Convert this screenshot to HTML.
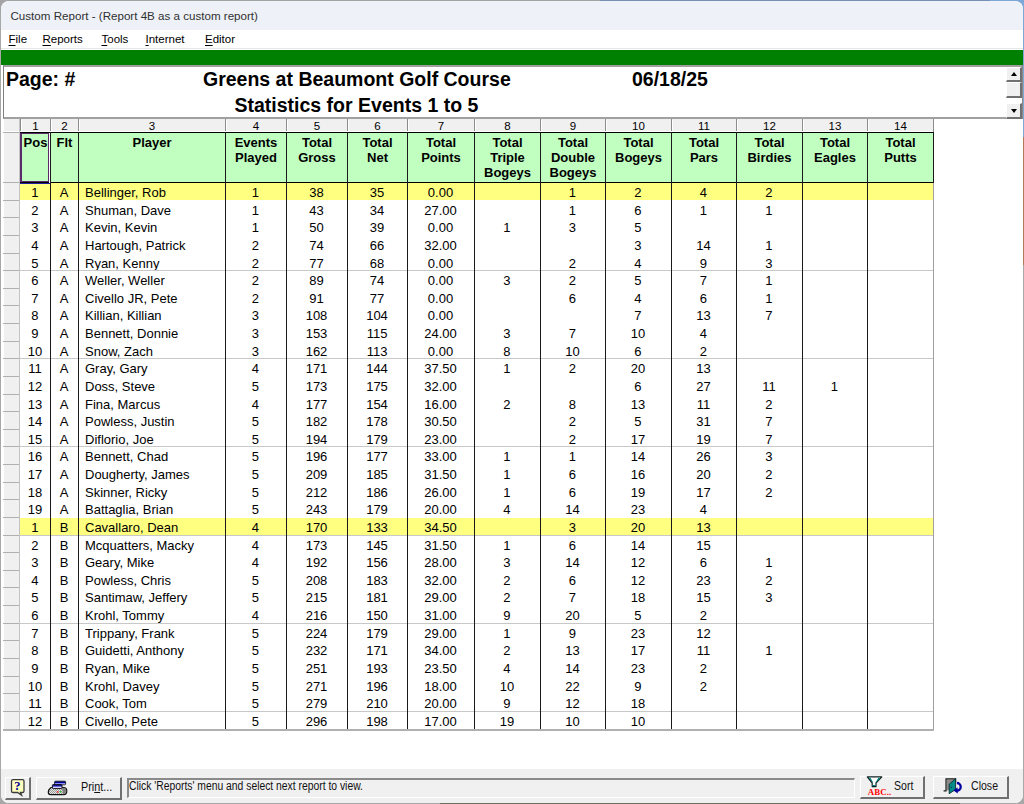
<!DOCTYPE html>
<html><head><meta charset="utf-8"><title>Custom Report</title>
<style>
*{box-sizing:border-box;margin:0;padding:0}
html,body{width:1024px;height:804px;overflow:hidden}
body{position:relative;background:#a8a8a8;font-family:"Liberation Sans",sans-serif;color:#000}
.a{position:absolute}
.t{position:absolute;white-space:nowrap;line-height:1}
#win{position:absolute;left:1px;top:1px;width:1021.5px;height:802px;background:#fff;border-radius:8px;overflow:hidden}
#title{position:absolute;left:0;top:0;width:1022px;height:29px;background:#eef2f8}
#menu{position:absolute;left:0;top:29px;width:1022px;height:19px;background:#fff}
.mi{position:absolute;top:32.5px;font-size:11.5px;color:#000;line-height:1}
.mi u{text-decoration:underline;text-underline-offset:1.5px}
#green{position:absolute;left:0;top:49px;width:1022px;height:15px;background:#008000}
.num{font-size:11.5px;text-align:center;color:#000}
.hd{font-size:13px;font-weight:bold;text-align:center;line-height:15.4px}
.cell{position:absolute;font-size:13.5px;line-height:1;white-space:nowrap;text-align:center;color:#000;transform:scaleX(0.963)}
.btn{position:absolute;background:#f0f0f0;border-style:solid;border-width:1px 2px 2px 1px;border-color:#fff #707070 #707070 #fff}
</style></head><body>
<div class="a" style="left:0;top:0;width:1024px;height:12px;background:#a4a4a4"></div>
<div class="a" style="left:600px;top:0;width:424px;height:12px;background:#7590b4"></div>
<div class="a" style="left:990px;top:0;width:34px;height:137px;background:#7da7d6"></div>
<div class="a" style="left:1000px;top:137px;width:24px;height:128px;background:#b07a58"></div>
<div class="a" style="left:440px;top:790px;width:520px;height:14px;background:#6a6f60"></div>
<div id="win">
<div id="title"></div>
<div class="t" style="left:9.5px;top:8.8px;font-size:11.6px;color:#303030">Custom Report - (Report 4B as a custom report)</div>
<div id="menu"></div>

<div class="mi" style="left:7.5px"><u>F</u>ile</div>
<div class="mi" style="left:41.5px"><u>R</u>eports</div>
<div class="mi" style="left:100.5px"><u>T</u>ools</div>
<div class="mi" style="left:144.5px"><u>I</u>nternet</div>
<div class="mi" style="left:204px"><u>E</u>ditor</div>
<div class="a" style="left:0;top:47px;width:1022px;height:1px;background:#e6e6e6"></div>
<div id="green"></div>
<div class="a" style="left:2px;top:64px;width:1019px;height:54px;border-top:2px solid #a0a0a0;border-left:1px solid #808080;border-bottom:2px solid #a0a0a0;background:#fff"></div>
<div class="t" style="left:5px;top:68.5px;font-size:19.5px;font-weight:bold">Page: #</div>
<div class="t" style="left:202px;top:68.5px;font-size:19.5px;font-weight:bold">Greens at Beaumont Golf Course</div>
<div class="t" style="left:631px;top:68.5px;font-size:19.5px;font-weight:bold">06/18/25</div>
<div class="t" style="left:233.5px;top:94.8px;font-size:19.5px;font-weight:bold">Statistics for Events 1 to 5</div>
<div class="a" style="left:1021px;top:64px;width:1px;height:54px;background:#8a8a8a"></div>
<div class="a" style="left:1005px;top:66px;width:16px;height:51px;background:#fff"></div>
<div class="btn" style="left:1005px;top:66px;width:16px;height:15px"></div>
<div class="btn" style="left:1005px;top:81px;width:16px;height:16px"></div>
<div class="btn" style="left:1005px;top:102px;width:16px;height:15.5px"></div>
<div class="a" style="left:1009.5px;top:71px;width:0;height:0;border-left:3.5px solid transparent;border-right:3.5px solid transparent;border-bottom:4px solid #000"></div>
<div class="a" style="left:1009.5px;top:108px;width:0;height:0;border-left:3.5px solid transparent;border-right:3.5px solid transparent;border-top:4px solid #000"></div>
<div class="a" style="left:2px;top:118px;width:931px;height:13px;background:#f0f0f0"></div>
<div class="a" style="left:2px;top:118px;width:17px;height:610px;background:#f0f0f0;border-left:1px solid #fff"></div>
<div class="t num" style="left:20px;top:119.5px;width:29px">1</div>
<div class="a" style="left:19px;top:118px;width:1px;height:13px;background:#8c8c8c"></div>
<div class="a" style="left:20px;top:119px;width:1px;height:12px;background:#fff"></div>
<div class="t num" style="left:50px;top:119.5px;width:27px">2</div>
<div class="a" style="left:49px;top:118px;width:1px;height:13px;background:#8c8c8c"></div>
<div class="a" style="left:50px;top:119px;width:1px;height:12px;background:#fff"></div>
<div class="t num" style="left:78px;top:119.5px;width:146px">3</div>
<div class="a" style="left:77px;top:118px;width:1px;height:13px;background:#8c8c8c"></div>
<div class="a" style="left:78px;top:119px;width:1px;height:12px;background:#fff"></div>
<div class="t num" style="left:225px;top:119.5px;width:60px">4</div>
<div class="a" style="left:224px;top:118px;width:1px;height:13px;background:#8c8c8c"></div>
<div class="a" style="left:225px;top:119px;width:1px;height:12px;background:#fff"></div>
<div class="t num" style="left:286px;top:119.5px;width:60px">5</div>
<div class="a" style="left:285px;top:118px;width:1px;height:13px;background:#8c8c8c"></div>
<div class="a" style="left:286px;top:119px;width:1px;height:12px;background:#fff"></div>
<div class="t num" style="left:347px;top:119.5px;width:59px">6</div>
<div class="a" style="left:346px;top:118px;width:1px;height:13px;background:#8c8c8c"></div>
<div class="a" style="left:347px;top:119px;width:1px;height:12px;background:#fff"></div>
<div class="t num" style="left:407px;top:119.5px;width:66px">7</div>
<div class="a" style="left:406px;top:118px;width:1px;height:13px;background:#8c8c8c"></div>
<div class="a" style="left:407px;top:119px;width:1px;height:12px;background:#fff"></div>
<div class="t num" style="left:474px;top:119.5px;width:65px">8</div>
<div class="a" style="left:473px;top:118px;width:1px;height:13px;background:#8c8c8c"></div>
<div class="a" style="left:474px;top:119px;width:1px;height:12px;background:#fff"></div>
<div class="t num" style="left:540px;top:119.5px;width:64px">9</div>
<div class="a" style="left:539px;top:118px;width:1px;height:13px;background:#8c8c8c"></div>
<div class="a" style="left:540px;top:119px;width:1px;height:12px;background:#fff"></div>
<div class="t num" style="left:605px;top:119.5px;width:65px">10</div>
<div class="a" style="left:604px;top:118px;width:1px;height:13px;background:#8c8c8c"></div>
<div class="a" style="left:605px;top:119px;width:1px;height:12px;background:#fff"></div>
<div class="t num" style="left:671px;top:119.5px;width:64px">11</div>
<div class="a" style="left:670px;top:118px;width:1px;height:13px;background:#8c8c8c"></div>
<div class="a" style="left:671px;top:119px;width:1px;height:12px;background:#fff"></div>
<div class="t num" style="left:736px;top:119.5px;width:65px">12</div>
<div class="a" style="left:735px;top:118px;width:1px;height:13px;background:#8c8c8c"></div>
<div class="a" style="left:736px;top:119px;width:1px;height:12px;background:#fff"></div>
<div class="t num" style="left:802px;top:119.5px;width:64px">13</div>
<div class="a" style="left:801px;top:118px;width:1px;height:13px;background:#8c8c8c"></div>
<div class="a" style="left:802px;top:119px;width:1px;height:12px;background:#fff"></div>
<div class="t num" style="left:867px;top:119.5px;width:65px">14</div>
<div class="a" style="left:866px;top:118px;width:1px;height:13px;background:#8c8c8c"></div>
<div class="a" style="left:867px;top:119px;width:1px;height:12px;background:#fff"></div>
<div class="a" style="left:932px;top:118px;width:1px;height:13px;background:#8c8c8c"></div>
<div class="a" style="left:2px;top:130px;width:930px;height:1px;background:#fff"></div>
<div class="a" style="left:19px;top:131px;width:914px;height:50px;background:#c0ffc0"></div>
<div class="t hd" style="left:20px;top:133.5px;width:29px;white-space:normal">Pos</div>
<div class="t hd" style="left:50px;top:133.5px;width:27px;white-space:normal">Flt</div>
<div class="t hd" style="left:78px;top:133.5px;width:146px;white-space:normal">Player</div>
<div class="t hd" style="left:225px;top:133.5px;width:60px;white-space:normal">Events<br>Played</div>
<div class="t hd" style="left:286px;top:133.5px;width:60px;white-space:normal">Total<br>Gross</div>
<div class="t hd" style="left:347px;top:133.5px;width:59px;white-space:normal">Total<br>Net</div>
<div class="t hd" style="left:407px;top:133.5px;width:66px;white-space:normal">Total<br>Points</div>
<div class="t hd" style="left:474px;top:133.5px;width:65px;white-space:normal">Total<br>Triple<br>Bogeys</div>
<div class="t hd" style="left:540px;top:133.5px;width:64px;white-space:normal">Total<br>Double<br>Bogeys</div>
<div class="t hd" style="left:605px;top:133.5px;width:65px;white-space:normal">Total<br>Bogeys</div>
<div class="t hd" style="left:671px;top:133.5px;width:64px;white-space:normal">Total<br>Pars</div>
<div class="t hd" style="left:736px;top:133.5px;width:65px;white-space:normal">Total<br>Birdies</div>
<div class="t hd" style="left:802px;top:133.5px;width:64px;white-space:normal">Total<br>Eagles</div>
<div class="t hd" style="left:867px;top:133.5px;width:65px;white-space:normal">Total<br>Putts</div>
<div class="a" style="left:19px;top:182px;width:914px;height:17px;background:#ffff80"></div>
<div class="cell" style="left:18.5px;top:185.0px;width:30px">1</div>
<div class="cell" style="left:48.5px;top:185.0px;width:28px">A</div>
<div class="cell" style="left:84px;top:185.0px;text-align:left;transform-origin:0 0">Bellinger, Rob</div>
<div class="cell" style="left:223.5px;top:185.0px;width:61px">1</div>
<div class="cell" style="left:284.5px;top:185.0px;width:61px">38</div>
<div class="cell" style="left:345.5px;top:185.0px;width:60px">35</div>
<div class="cell" style="left:405.5px;top:185.0px;width:67px">0.00</div>
<div class="cell" style="left:538.5px;top:185.0px;width:65px">1</div>
<div class="cell" style="left:603.5px;top:185.0px;width:66px">2</div>
<div class="cell" style="left:669.5px;top:185.0px;width:65px">4</div>
<div class="cell" style="left:734.5px;top:185.0px;width:66px">2</div>
<div class="cell" style="left:18.5px;top:202.63px;width:30px">2</div>
<div class="cell" style="left:48.5px;top:202.63px;width:28px">A</div>
<div class="cell" style="left:84px;top:202.63px;text-align:left;transform-origin:0 0">Shuman, Dave</div>
<div class="cell" style="left:223.5px;top:202.63px;width:61px">1</div>
<div class="cell" style="left:284.5px;top:202.63px;width:61px">43</div>
<div class="cell" style="left:345.5px;top:202.63px;width:60px">34</div>
<div class="cell" style="left:405.5px;top:202.63px;width:67px">27.00</div>
<div class="cell" style="left:538.5px;top:202.63px;width:65px">1</div>
<div class="cell" style="left:603.5px;top:202.63px;width:66px">6</div>
<div class="cell" style="left:669.5px;top:202.63px;width:65px">1</div>
<div class="cell" style="left:734.5px;top:202.63px;width:66px">1</div>
<div class="cell" style="left:18.5px;top:220.26px;width:30px">3</div>
<div class="cell" style="left:48.5px;top:220.26px;width:28px">A</div>
<div class="cell" style="left:84px;top:220.26px;text-align:left;transform-origin:0 0">Kevin, Kevin</div>
<div class="cell" style="left:223.5px;top:220.26px;width:61px">1</div>
<div class="cell" style="left:284.5px;top:220.26px;width:61px">50</div>
<div class="cell" style="left:345.5px;top:220.26px;width:60px">39</div>
<div class="cell" style="left:405.5px;top:220.26px;width:67px">0.00</div>
<div class="cell" style="left:472.5px;top:220.26px;width:66px">1</div>
<div class="cell" style="left:538.5px;top:220.26px;width:65px">3</div>
<div class="cell" style="left:603.5px;top:220.26px;width:66px">5</div>
<div class="cell" style="left:18.5px;top:237.89000000000001px;width:30px">4</div>
<div class="cell" style="left:48.5px;top:237.89000000000001px;width:28px">A</div>
<div class="cell" style="left:84px;top:237.89000000000001px;text-align:left;transform-origin:0 0">Hartough, Patrick</div>
<div class="cell" style="left:223.5px;top:237.89000000000001px;width:61px">2</div>
<div class="cell" style="left:284.5px;top:237.89000000000001px;width:61px">74</div>
<div class="cell" style="left:345.5px;top:237.89000000000001px;width:60px">66</div>
<div class="cell" style="left:405.5px;top:237.89000000000001px;width:67px">32.00</div>
<div class="cell" style="left:603.5px;top:237.89000000000001px;width:66px">3</div>
<div class="cell" style="left:669.5px;top:237.89000000000001px;width:65px">14</div>
<div class="cell" style="left:734.5px;top:237.89000000000001px;width:66px">1</div>
<div class="cell" style="left:18.5px;top:255.51999999999998px;width:30px">5</div>
<div class="cell" style="left:48.5px;top:255.51999999999998px;width:28px">A</div>
<div class="cell" style="left:84px;top:255.51999999999998px;text-align:left;transform-origin:0 0">Ryan, Kenny</div>
<div class="cell" style="left:223.5px;top:255.51999999999998px;width:61px">2</div>
<div class="cell" style="left:284.5px;top:255.51999999999998px;width:61px">77</div>
<div class="cell" style="left:345.5px;top:255.51999999999998px;width:60px">68</div>
<div class="cell" style="left:405.5px;top:255.51999999999998px;width:67px">0.00</div>
<div class="cell" style="left:538.5px;top:255.51999999999998px;width:65px">2</div>
<div class="cell" style="left:603.5px;top:255.51999999999998px;width:66px">4</div>
<div class="cell" style="left:669.5px;top:255.51999999999998px;width:65px">9</div>
<div class="cell" style="left:734.5px;top:255.51999999999998px;width:66px">3</div>
<div class="cell" style="left:18.5px;top:273.15px;width:30px">6</div>
<div class="cell" style="left:48.5px;top:273.15px;width:28px">A</div>
<div class="cell" style="left:84px;top:273.15px;text-align:left;transform-origin:0 0">Weller, Weller</div>
<div class="cell" style="left:223.5px;top:273.15px;width:61px">2</div>
<div class="cell" style="left:284.5px;top:273.15px;width:61px">89</div>
<div class="cell" style="left:345.5px;top:273.15px;width:60px">74</div>
<div class="cell" style="left:405.5px;top:273.15px;width:67px">0.00</div>
<div class="cell" style="left:472.5px;top:273.15px;width:66px">3</div>
<div class="cell" style="left:538.5px;top:273.15px;width:65px">2</div>
<div class="cell" style="left:603.5px;top:273.15px;width:66px">5</div>
<div class="cell" style="left:669.5px;top:273.15px;width:65px">7</div>
<div class="cell" style="left:734.5px;top:273.15px;width:66px">1</div>
<div class="cell" style="left:18.5px;top:290.78px;width:30px">7</div>
<div class="cell" style="left:48.5px;top:290.78px;width:28px">A</div>
<div class="cell" style="left:84px;top:290.78px;text-align:left;transform-origin:0 0">Civello JR, Pete</div>
<div class="cell" style="left:223.5px;top:290.78px;width:61px">2</div>
<div class="cell" style="left:284.5px;top:290.78px;width:61px">91</div>
<div class="cell" style="left:345.5px;top:290.78px;width:60px">77</div>
<div class="cell" style="left:405.5px;top:290.78px;width:67px">0.00</div>
<div class="cell" style="left:538.5px;top:290.78px;width:65px">6</div>
<div class="cell" style="left:603.5px;top:290.78px;width:66px">4</div>
<div class="cell" style="left:669.5px;top:290.78px;width:65px">6</div>
<div class="cell" style="left:734.5px;top:290.78px;width:66px">1</div>
<div class="cell" style="left:18.5px;top:308.40999999999997px;width:30px">8</div>
<div class="cell" style="left:48.5px;top:308.40999999999997px;width:28px">A</div>
<div class="cell" style="left:84px;top:308.40999999999997px;text-align:left;transform-origin:0 0">Killian, Killian</div>
<div class="cell" style="left:223.5px;top:308.40999999999997px;width:61px">3</div>
<div class="cell" style="left:284.5px;top:308.40999999999997px;width:61px">108</div>
<div class="cell" style="left:345.5px;top:308.40999999999997px;width:60px">104</div>
<div class="cell" style="left:405.5px;top:308.40999999999997px;width:67px">0.00</div>
<div class="cell" style="left:603.5px;top:308.40999999999997px;width:66px">7</div>
<div class="cell" style="left:669.5px;top:308.40999999999997px;width:65px">13</div>
<div class="cell" style="left:734.5px;top:308.40999999999997px;width:66px">7</div>
<div class="cell" style="left:18.5px;top:326.03999999999996px;width:30px">9</div>
<div class="cell" style="left:48.5px;top:326.03999999999996px;width:28px">A</div>
<div class="cell" style="left:84px;top:326.03999999999996px;text-align:left;transform-origin:0 0">Bennett, Donnie</div>
<div class="cell" style="left:223.5px;top:326.03999999999996px;width:61px">3</div>
<div class="cell" style="left:284.5px;top:326.03999999999996px;width:61px">153</div>
<div class="cell" style="left:345.5px;top:326.03999999999996px;width:60px">115</div>
<div class="cell" style="left:405.5px;top:326.03999999999996px;width:67px">24.00</div>
<div class="cell" style="left:472.5px;top:326.03999999999996px;width:66px">3</div>
<div class="cell" style="left:538.5px;top:326.03999999999996px;width:65px">7</div>
<div class="cell" style="left:603.5px;top:326.03999999999996px;width:66px">10</div>
<div class="cell" style="left:669.5px;top:326.03999999999996px;width:65px">4</div>
<div class="cell" style="left:18.5px;top:343.66999999999996px;width:30px">10</div>
<div class="cell" style="left:48.5px;top:343.66999999999996px;width:28px">A</div>
<div class="cell" style="left:84px;top:343.66999999999996px;text-align:left;transform-origin:0 0">Snow, Zach</div>
<div class="cell" style="left:223.5px;top:343.66999999999996px;width:61px">3</div>
<div class="cell" style="left:284.5px;top:343.66999999999996px;width:61px">162</div>
<div class="cell" style="left:345.5px;top:343.66999999999996px;width:60px">113</div>
<div class="cell" style="left:405.5px;top:343.66999999999996px;width:67px">0.00</div>
<div class="cell" style="left:472.5px;top:343.66999999999996px;width:66px">8</div>
<div class="cell" style="left:538.5px;top:343.66999999999996px;width:65px">10</div>
<div class="cell" style="left:603.5px;top:343.66999999999996px;width:66px">6</div>
<div class="cell" style="left:669.5px;top:343.66999999999996px;width:65px">2</div>
<div class="cell" style="left:18.5px;top:361.29999999999995px;width:30px">11</div>
<div class="cell" style="left:48.5px;top:361.29999999999995px;width:28px">A</div>
<div class="cell" style="left:84px;top:361.29999999999995px;text-align:left;transform-origin:0 0">Gray, Gary</div>
<div class="cell" style="left:223.5px;top:361.29999999999995px;width:61px">4</div>
<div class="cell" style="left:284.5px;top:361.29999999999995px;width:61px">171</div>
<div class="cell" style="left:345.5px;top:361.29999999999995px;width:60px">144</div>
<div class="cell" style="left:405.5px;top:361.29999999999995px;width:67px">37.50</div>
<div class="cell" style="left:472.5px;top:361.29999999999995px;width:66px">1</div>
<div class="cell" style="left:538.5px;top:361.29999999999995px;width:65px">2</div>
<div class="cell" style="left:603.5px;top:361.29999999999995px;width:66px">20</div>
<div class="cell" style="left:669.5px;top:361.29999999999995px;width:65px">13</div>
<div class="cell" style="left:18.5px;top:378.92999999999995px;width:30px">12</div>
<div class="cell" style="left:48.5px;top:378.92999999999995px;width:28px">A</div>
<div class="cell" style="left:84px;top:378.92999999999995px;text-align:left;transform-origin:0 0">Doss, Steve</div>
<div class="cell" style="left:223.5px;top:378.92999999999995px;width:61px">5</div>
<div class="cell" style="left:284.5px;top:378.92999999999995px;width:61px">173</div>
<div class="cell" style="left:345.5px;top:378.92999999999995px;width:60px">175</div>
<div class="cell" style="left:405.5px;top:378.92999999999995px;width:67px">32.00</div>
<div class="cell" style="left:603.5px;top:378.92999999999995px;width:66px">6</div>
<div class="cell" style="left:669.5px;top:378.92999999999995px;width:65px">27</div>
<div class="cell" style="left:734.5px;top:378.92999999999995px;width:66px">11</div>
<div class="cell" style="left:800.5px;top:378.92999999999995px;width:65px">1</div>
<div class="cell" style="left:18.5px;top:396.55999999999995px;width:30px">13</div>
<div class="cell" style="left:48.5px;top:396.55999999999995px;width:28px">A</div>
<div class="cell" style="left:84px;top:396.55999999999995px;text-align:left;transform-origin:0 0">Fina, Marcus</div>
<div class="cell" style="left:223.5px;top:396.55999999999995px;width:61px">4</div>
<div class="cell" style="left:284.5px;top:396.55999999999995px;width:61px">177</div>
<div class="cell" style="left:345.5px;top:396.55999999999995px;width:60px">154</div>
<div class="cell" style="left:405.5px;top:396.55999999999995px;width:67px">16.00</div>
<div class="cell" style="left:472.5px;top:396.55999999999995px;width:66px">2</div>
<div class="cell" style="left:538.5px;top:396.55999999999995px;width:65px">8</div>
<div class="cell" style="left:603.5px;top:396.55999999999995px;width:66px">13</div>
<div class="cell" style="left:669.5px;top:396.55999999999995px;width:65px">11</div>
<div class="cell" style="left:734.5px;top:396.55999999999995px;width:66px">2</div>
<div class="cell" style="left:18.5px;top:414.18999999999994px;width:30px">14</div>
<div class="cell" style="left:48.5px;top:414.18999999999994px;width:28px">A</div>
<div class="cell" style="left:84px;top:414.18999999999994px;text-align:left;transform-origin:0 0">Powless, Justin</div>
<div class="cell" style="left:223.5px;top:414.18999999999994px;width:61px">5</div>
<div class="cell" style="left:284.5px;top:414.18999999999994px;width:61px">182</div>
<div class="cell" style="left:345.5px;top:414.18999999999994px;width:60px">178</div>
<div class="cell" style="left:405.5px;top:414.18999999999994px;width:67px">30.50</div>
<div class="cell" style="left:538.5px;top:414.18999999999994px;width:65px">2</div>
<div class="cell" style="left:603.5px;top:414.18999999999994px;width:66px">5</div>
<div class="cell" style="left:669.5px;top:414.18999999999994px;width:65px">31</div>
<div class="cell" style="left:734.5px;top:414.18999999999994px;width:66px">7</div>
<div class="cell" style="left:18.5px;top:431.81999999999994px;width:30px">15</div>
<div class="cell" style="left:48.5px;top:431.81999999999994px;width:28px">A</div>
<div class="cell" style="left:84px;top:431.81999999999994px;text-align:left;transform-origin:0 0">Diflorio, Joe</div>
<div class="cell" style="left:223.5px;top:431.81999999999994px;width:61px">5</div>
<div class="cell" style="left:284.5px;top:431.81999999999994px;width:61px">194</div>
<div class="cell" style="left:345.5px;top:431.81999999999994px;width:60px">179</div>
<div class="cell" style="left:405.5px;top:431.81999999999994px;width:67px">23.00</div>
<div class="cell" style="left:538.5px;top:431.81999999999994px;width:65px">2</div>
<div class="cell" style="left:603.5px;top:431.81999999999994px;width:66px">17</div>
<div class="cell" style="left:669.5px;top:431.81999999999994px;width:65px">19</div>
<div class="cell" style="left:734.5px;top:431.81999999999994px;width:66px">7</div>
<div class="cell" style="left:18.5px;top:449.44999999999993px;width:30px">16</div>
<div class="cell" style="left:48.5px;top:449.44999999999993px;width:28px">A</div>
<div class="cell" style="left:84px;top:449.44999999999993px;text-align:left;transform-origin:0 0">Bennett, Chad</div>
<div class="cell" style="left:223.5px;top:449.44999999999993px;width:61px">5</div>
<div class="cell" style="left:284.5px;top:449.44999999999993px;width:61px">196</div>
<div class="cell" style="left:345.5px;top:449.44999999999993px;width:60px">177</div>
<div class="cell" style="left:405.5px;top:449.44999999999993px;width:67px">33.00</div>
<div class="cell" style="left:472.5px;top:449.44999999999993px;width:66px">1</div>
<div class="cell" style="left:538.5px;top:449.44999999999993px;width:65px">1</div>
<div class="cell" style="left:603.5px;top:449.44999999999993px;width:66px">14</div>
<div class="cell" style="left:669.5px;top:449.44999999999993px;width:65px">26</div>
<div class="cell" style="left:734.5px;top:449.44999999999993px;width:66px">3</div>
<div class="cell" style="left:18.5px;top:467.0799999999999px;width:30px">17</div>
<div class="cell" style="left:48.5px;top:467.0799999999999px;width:28px">A</div>
<div class="cell" style="left:84px;top:467.0799999999999px;text-align:left;transform-origin:0 0">Dougherty, James</div>
<div class="cell" style="left:223.5px;top:467.0799999999999px;width:61px">5</div>
<div class="cell" style="left:284.5px;top:467.0799999999999px;width:61px">209</div>
<div class="cell" style="left:345.5px;top:467.0799999999999px;width:60px">185</div>
<div class="cell" style="left:405.5px;top:467.0799999999999px;width:67px">31.50</div>
<div class="cell" style="left:472.5px;top:467.0799999999999px;width:66px">1</div>
<div class="cell" style="left:538.5px;top:467.0799999999999px;width:65px">6</div>
<div class="cell" style="left:603.5px;top:467.0799999999999px;width:66px">16</div>
<div class="cell" style="left:669.5px;top:467.0799999999999px;width:65px">20</div>
<div class="cell" style="left:734.5px;top:467.0799999999999px;width:66px">2</div>
<div class="cell" style="left:18.5px;top:484.7099999999999px;width:30px">18</div>
<div class="cell" style="left:48.5px;top:484.7099999999999px;width:28px">A</div>
<div class="cell" style="left:84px;top:484.7099999999999px;text-align:left;transform-origin:0 0">Skinner, Ricky</div>
<div class="cell" style="left:223.5px;top:484.7099999999999px;width:61px">5</div>
<div class="cell" style="left:284.5px;top:484.7099999999999px;width:61px">212</div>
<div class="cell" style="left:345.5px;top:484.7099999999999px;width:60px">186</div>
<div class="cell" style="left:405.5px;top:484.7099999999999px;width:67px">26.00</div>
<div class="cell" style="left:472.5px;top:484.7099999999999px;width:66px">1</div>
<div class="cell" style="left:538.5px;top:484.7099999999999px;width:65px">6</div>
<div class="cell" style="left:603.5px;top:484.7099999999999px;width:66px">19</div>
<div class="cell" style="left:669.5px;top:484.7099999999999px;width:65px">17</div>
<div class="cell" style="left:734.5px;top:484.7099999999999px;width:66px">2</div>
<div class="cell" style="left:18.5px;top:502.3399999999999px;width:30px">19</div>
<div class="cell" style="left:48.5px;top:502.3399999999999px;width:28px">A</div>
<div class="cell" style="left:84px;top:502.3399999999999px;text-align:left;transform-origin:0 0">Battaglia, Brian</div>
<div class="cell" style="left:223.5px;top:502.3399999999999px;width:61px">5</div>
<div class="cell" style="left:284.5px;top:502.3399999999999px;width:61px">243</div>
<div class="cell" style="left:345.5px;top:502.3399999999999px;width:60px">179</div>
<div class="cell" style="left:405.5px;top:502.3399999999999px;width:67px">20.00</div>
<div class="cell" style="left:472.5px;top:502.3399999999999px;width:66px">4</div>
<div class="cell" style="left:538.5px;top:502.3399999999999px;width:65px">14</div>
<div class="cell" style="left:603.5px;top:502.3399999999999px;width:66px">23</div>
<div class="cell" style="left:669.5px;top:502.3399999999999px;width:65px">4</div>
<div class="a" style="left:19px;top:517px;width:914px;height:17px;background:#ffff80"></div>
<div class="cell" style="left:18.5px;top:519.9699999999999px;width:30px">1</div>
<div class="cell" style="left:48.5px;top:519.9699999999999px;width:28px">B</div>
<div class="cell" style="left:84px;top:519.9699999999999px;text-align:left;transform-origin:0 0">Cavallaro, Dean</div>
<div class="cell" style="left:223.5px;top:519.9699999999999px;width:61px">4</div>
<div class="cell" style="left:284.5px;top:519.9699999999999px;width:61px">170</div>
<div class="cell" style="left:345.5px;top:519.9699999999999px;width:60px">133</div>
<div class="cell" style="left:405.5px;top:519.9699999999999px;width:67px">34.50</div>
<div class="cell" style="left:538.5px;top:519.9699999999999px;width:65px">3</div>
<div class="cell" style="left:603.5px;top:519.9699999999999px;width:66px">20</div>
<div class="cell" style="left:669.5px;top:519.9699999999999px;width:65px">13</div>
<div class="cell" style="left:18.5px;top:537.5999999999999px;width:30px">2</div>
<div class="cell" style="left:48.5px;top:537.5999999999999px;width:28px">B</div>
<div class="cell" style="left:84px;top:537.5999999999999px;text-align:left;transform-origin:0 0">Mcquatters, Macky</div>
<div class="cell" style="left:223.5px;top:537.5999999999999px;width:61px">4</div>
<div class="cell" style="left:284.5px;top:537.5999999999999px;width:61px">173</div>
<div class="cell" style="left:345.5px;top:537.5999999999999px;width:60px">145</div>
<div class="cell" style="left:405.5px;top:537.5999999999999px;width:67px">31.50</div>
<div class="cell" style="left:472.5px;top:537.5999999999999px;width:66px">1</div>
<div class="cell" style="left:538.5px;top:537.5999999999999px;width:65px">6</div>
<div class="cell" style="left:603.5px;top:537.5999999999999px;width:66px">14</div>
<div class="cell" style="left:669.5px;top:537.5999999999999px;width:65px">15</div>
<div class="cell" style="left:18.5px;top:555.2299999999999px;width:30px">3</div>
<div class="cell" style="left:48.5px;top:555.2299999999999px;width:28px">B</div>
<div class="cell" style="left:84px;top:555.2299999999999px;text-align:left;transform-origin:0 0">Geary, Mike</div>
<div class="cell" style="left:223.5px;top:555.2299999999999px;width:61px">4</div>
<div class="cell" style="left:284.5px;top:555.2299999999999px;width:61px">192</div>
<div class="cell" style="left:345.5px;top:555.2299999999999px;width:60px">156</div>
<div class="cell" style="left:405.5px;top:555.2299999999999px;width:67px">28.00</div>
<div class="cell" style="left:472.5px;top:555.2299999999999px;width:66px">3</div>
<div class="cell" style="left:538.5px;top:555.2299999999999px;width:65px">14</div>
<div class="cell" style="left:603.5px;top:555.2299999999999px;width:66px">12</div>
<div class="cell" style="left:669.5px;top:555.2299999999999px;width:65px">6</div>
<div class="cell" style="left:734.5px;top:555.2299999999999px;width:66px">1</div>
<div class="cell" style="left:18.5px;top:572.8599999999999px;width:30px">4</div>
<div class="cell" style="left:48.5px;top:572.8599999999999px;width:28px">B</div>
<div class="cell" style="left:84px;top:572.8599999999999px;text-align:left;transform-origin:0 0">Powless, Chris</div>
<div class="cell" style="left:223.5px;top:572.8599999999999px;width:61px">5</div>
<div class="cell" style="left:284.5px;top:572.8599999999999px;width:61px">208</div>
<div class="cell" style="left:345.5px;top:572.8599999999999px;width:60px">183</div>
<div class="cell" style="left:405.5px;top:572.8599999999999px;width:67px">32.00</div>
<div class="cell" style="left:472.5px;top:572.8599999999999px;width:66px">2</div>
<div class="cell" style="left:538.5px;top:572.8599999999999px;width:65px">6</div>
<div class="cell" style="left:603.5px;top:572.8599999999999px;width:66px">12</div>
<div class="cell" style="left:669.5px;top:572.8599999999999px;width:65px">23</div>
<div class="cell" style="left:734.5px;top:572.8599999999999px;width:66px">2</div>
<div class="cell" style="left:18.5px;top:590.4899999999999px;width:30px">5</div>
<div class="cell" style="left:48.5px;top:590.4899999999999px;width:28px">B</div>
<div class="cell" style="left:84px;top:590.4899999999999px;text-align:left;transform-origin:0 0">Santimaw, Jeffery</div>
<div class="cell" style="left:223.5px;top:590.4899999999999px;width:61px">5</div>
<div class="cell" style="left:284.5px;top:590.4899999999999px;width:61px">215</div>
<div class="cell" style="left:345.5px;top:590.4899999999999px;width:60px">181</div>
<div class="cell" style="left:405.5px;top:590.4899999999999px;width:67px">29.00</div>
<div class="cell" style="left:472.5px;top:590.4899999999999px;width:66px">2</div>
<div class="cell" style="left:538.5px;top:590.4899999999999px;width:65px">7</div>
<div class="cell" style="left:603.5px;top:590.4899999999999px;width:66px">18</div>
<div class="cell" style="left:669.5px;top:590.4899999999999px;width:65px">15</div>
<div class="cell" style="left:734.5px;top:590.4899999999999px;width:66px">3</div>
<div class="cell" style="left:18.5px;top:608.12px;width:30px">6</div>
<div class="cell" style="left:48.5px;top:608.12px;width:28px">B</div>
<div class="cell" style="left:84px;top:608.12px;text-align:left;transform-origin:0 0">Krohl, Tommy</div>
<div class="cell" style="left:223.5px;top:608.12px;width:61px">4</div>
<div class="cell" style="left:284.5px;top:608.12px;width:61px">216</div>
<div class="cell" style="left:345.5px;top:608.12px;width:60px">150</div>
<div class="cell" style="left:405.5px;top:608.12px;width:67px">31.00</div>
<div class="cell" style="left:472.5px;top:608.12px;width:66px">9</div>
<div class="cell" style="left:538.5px;top:608.12px;width:65px">20</div>
<div class="cell" style="left:603.5px;top:608.12px;width:66px">5</div>
<div class="cell" style="left:669.5px;top:608.12px;width:65px">2</div>
<div class="cell" style="left:18.5px;top:625.75px;width:30px">7</div>
<div class="cell" style="left:48.5px;top:625.75px;width:28px">B</div>
<div class="cell" style="left:84px;top:625.75px;text-align:left;transform-origin:0 0">Trippany, Frank</div>
<div class="cell" style="left:223.5px;top:625.75px;width:61px">5</div>
<div class="cell" style="left:284.5px;top:625.75px;width:61px">224</div>
<div class="cell" style="left:345.5px;top:625.75px;width:60px">179</div>
<div class="cell" style="left:405.5px;top:625.75px;width:67px">29.00</div>
<div class="cell" style="left:472.5px;top:625.75px;width:66px">1</div>
<div class="cell" style="left:538.5px;top:625.75px;width:65px">9</div>
<div class="cell" style="left:603.5px;top:625.75px;width:66px">23</div>
<div class="cell" style="left:669.5px;top:625.75px;width:65px">12</div>
<div class="cell" style="left:18.5px;top:643.38px;width:30px">8</div>
<div class="cell" style="left:48.5px;top:643.38px;width:28px">B</div>
<div class="cell" style="left:84px;top:643.38px;text-align:left;transform-origin:0 0">Guidetti, Anthony</div>
<div class="cell" style="left:223.5px;top:643.38px;width:61px">5</div>
<div class="cell" style="left:284.5px;top:643.38px;width:61px">232</div>
<div class="cell" style="left:345.5px;top:643.38px;width:60px">171</div>
<div class="cell" style="left:405.5px;top:643.38px;width:67px">34.00</div>
<div class="cell" style="left:472.5px;top:643.38px;width:66px">2</div>
<div class="cell" style="left:538.5px;top:643.38px;width:65px">13</div>
<div class="cell" style="left:603.5px;top:643.38px;width:66px">17</div>
<div class="cell" style="left:669.5px;top:643.38px;width:65px">11</div>
<div class="cell" style="left:734.5px;top:643.38px;width:66px">1</div>
<div class="cell" style="left:18.5px;top:661.01px;width:30px">9</div>
<div class="cell" style="left:48.5px;top:661.01px;width:28px">B</div>
<div class="cell" style="left:84px;top:661.01px;text-align:left;transform-origin:0 0">Ryan, Mike</div>
<div class="cell" style="left:223.5px;top:661.01px;width:61px">5</div>
<div class="cell" style="left:284.5px;top:661.01px;width:61px">251</div>
<div class="cell" style="left:345.5px;top:661.01px;width:60px">193</div>
<div class="cell" style="left:405.5px;top:661.01px;width:67px">23.50</div>
<div class="cell" style="left:472.5px;top:661.01px;width:66px">4</div>
<div class="cell" style="left:538.5px;top:661.01px;width:65px">14</div>
<div class="cell" style="left:603.5px;top:661.01px;width:66px">23</div>
<div class="cell" style="left:669.5px;top:661.01px;width:65px">2</div>
<div class="cell" style="left:18.5px;top:678.64px;width:30px">10</div>
<div class="cell" style="left:48.5px;top:678.64px;width:28px">B</div>
<div class="cell" style="left:84px;top:678.64px;text-align:left;transform-origin:0 0">Krohl, Davey</div>
<div class="cell" style="left:223.5px;top:678.64px;width:61px">5</div>
<div class="cell" style="left:284.5px;top:678.64px;width:61px">271</div>
<div class="cell" style="left:345.5px;top:678.64px;width:60px">196</div>
<div class="cell" style="left:405.5px;top:678.64px;width:67px">18.00</div>
<div class="cell" style="left:472.5px;top:678.64px;width:66px">10</div>
<div class="cell" style="left:538.5px;top:678.64px;width:65px">22</div>
<div class="cell" style="left:603.5px;top:678.64px;width:66px">9</div>
<div class="cell" style="left:669.5px;top:678.64px;width:65px">2</div>
<div class="cell" style="left:18.5px;top:696.27px;width:30px">11</div>
<div class="cell" style="left:48.5px;top:696.27px;width:28px">B</div>
<div class="cell" style="left:84px;top:696.27px;text-align:left;transform-origin:0 0">Cook, Tom</div>
<div class="cell" style="left:223.5px;top:696.27px;width:61px">5</div>
<div class="cell" style="left:284.5px;top:696.27px;width:61px">279</div>
<div class="cell" style="left:345.5px;top:696.27px;width:60px">210</div>
<div class="cell" style="left:405.5px;top:696.27px;width:67px">20.00</div>
<div class="cell" style="left:472.5px;top:696.27px;width:66px">9</div>
<div class="cell" style="left:538.5px;top:696.27px;width:65px">12</div>
<div class="cell" style="left:603.5px;top:696.27px;width:66px">18</div>
<div class="cell" style="left:18.5px;top:713.9px;width:30px">12</div>
<div class="cell" style="left:48.5px;top:713.9px;width:28px">B</div>
<div class="cell" style="left:84px;top:713.9px;text-align:left;transform-origin:0 0">Civello, Pete</div>
<div class="cell" style="left:223.5px;top:713.9px;width:61px">5</div>
<div class="cell" style="left:284.5px;top:713.9px;width:61px">296</div>
<div class="cell" style="left:345.5px;top:713.9px;width:60px">198</div>
<div class="cell" style="left:405.5px;top:713.9px;width:67px">17.00</div>
<div class="cell" style="left:472.5px;top:713.9px;width:66px">19</div>
<div class="cell" style="left:538.5px;top:713.9px;width:65px">10</div>
<div class="cell" style="left:603.5px;top:713.9px;width:66px">10</div>
<div class="a" style="left:2px;top:181px;width:17px;height:1px;background:#b0b0b0"></div>
<div class="a" style="left:2px;top:199px;width:17px;height:1px;background:#b0b0b0"></div>
<div class="a" style="left:2px;top:216px;width:17px;height:1px;background:#b0b0b0"></div>
<div class="a" style="left:2px;top:234px;width:17px;height:1px;background:#b0b0b0"></div>
<div class="a" style="left:2px;top:252px;width:17px;height:1px;background:#b0b0b0"></div>
<div class="a" style="left:2px;top:269px;width:17px;height:1px;background:#b0b0b0"></div>
<div class="a" style="left:2px;top:287px;width:17px;height:1px;background:#b0b0b0"></div>
<div class="a" style="left:2px;top:304px;width:17px;height:1px;background:#b0b0b0"></div>
<div class="a" style="left:2px;top:322px;width:17px;height:1px;background:#b0b0b0"></div>
<div class="a" style="left:2px;top:340px;width:17px;height:1px;background:#b0b0b0"></div>
<div class="a" style="left:2px;top:357px;width:17px;height:1px;background:#b0b0b0"></div>
<div class="a" style="left:2px;top:375px;width:17px;height:1px;background:#b0b0b0"></div>
<div class="a" style="left:2px;top:393px;width:17px;height:1px;background:#b0b0b0"></div>
<div class="a" style="left:2px;top:410px;width:17px;height:1px;background:#b0b0b0"></div>
<div class="a" style="left:2px;top:428px;width:17px;height:1px;background:#b0b0b0"></div>
<div class="a" style="left:2px;top:445px;width:17px;height:1px;background:#b0b0b0"></div>
<div class="a" style="left:2px;top:463px;width:17px;height:1px;background:#b0b0b0"></div>
<div class="a" style="left:2px;top:481px;width:17px;height:1px;background:#b0b0b0"></div>
<div class="a" style="left:2px;top:498px;width:17px;height:1px;background:#b0b0b0"></div>
<div class="a" style="left:2px;top:516px;width:17px;height:1px;background:#b0b0b0"></div>
<div class="a" style="left:2px;top:534px;width:17px;height:1px;background:#b0b0b0"></div>
<div class="a" style="left:2px;top:551px;width:17px;height:1px;background:#b0b0b0"></div>
<div class="a" style="left:2px;top:569px;width:17px;height:1px;background:#b0b0b0"></div>
<div class="a" style="left:2px;top:586px;width:17px;height:1px;background:#b0b0b0"></div>
<div class="a" style="left:2px;top:604px;width:17px;height:1px;background:#b0b0b0"></div>
<div class="a" style="left:2px;top:622px;width:17px;height:1px;background:#b0b0b0"></div>
<div class="a" style="left:2px;top:639px;width:17px;height:1px;background:#b0b0b0"></div>
<div class="a" style="left:2px;top:657px;width:17px;height:1px;background:#b0b0b0"></div>
<div class="a" style="left:2px;top:675px;width:17px;height:1px;background:#b0b0b0"></div>
<div class="a" style="left:2px;top:692px;width:17px;height:1px;background:#b0b0b0"></div>
<div class="a" style="left:2px;top:710px;width:17px;height:1px;background:#b0b0b0"></div>
<div class="a" style="left:2px;top:728px;width:17px;height:1px;background:#b0b0b0"></div>
<div class="a" style="left:2px;top:131px;width:17px;height:1px;background:#b0b0b0"></div>
<div class="a" style="left:18px;top:118px;width:1px;height:610px;background:#c4c4c4"></div>
<div class="a" style="left:19px;top:269px;width:914px;height:1px;background:#c8c8c8"></div>
<div class="a" style="left:19px;top:357px;width:914px;height:1px;background:#c8c8c8"></div>
<div class="a" style="left:19px;top:445px;width:914px;height:1px;background:#c8c8c8"></div>
<div class="a" style="left:19px;top:534px;width:914px;height:1px;background:#c8c8c8"></div>
<div class="a" style="left:19px;top:622px;width:914px;height:1px;background:#c8c8c8"></div>
<div class="a" style="left:19px;top:710px;width:914px;height:1px;background:#c8c8c8"></div>
<div class="a" style="left:19px;top:131px;width:914px;height:1px;background:#000"></div>
<div class="a" style="left:19px;top:181px;width:914px;height:1px;background:#000"></div>
<div class="a" style="left:49px;top:131px;width:1px;height:597px;background:#1a1a1a"></div>
<div class="a" style="left:77px;top:131px;width:1px;height:597px;background:#1a1a1a"></div>
<div class="a" style="left:224px;top:131px;width:1px;height:597px;background:#1a1a1a"></div>
<div class="a" style="left:285px;top:131px;width:1px;height:597px;background:#1a1a1a"></div>
<div class="a" style="left:346px;top:131px;width:1px;height:597px;background:#1a1a1a"></div>
<div class="a" style="left:406px;top:131px;width:1px;height:597px;background:#1a1a1a"></div>
<div class="a" style="left:473px;top:131px;width:1px;height:597px;background:#1a1a1a"></div>
<div class="a" style="left:539px;top:131px;width:1px;height:597px;background:#1a1a1a"></div>
<div class="a" style="left:604px;top:131px;width:1px;height:597px;background:#1a1a1a"></div>
<div class="a" style="left:670px;top:131px;width:1px;height:597px;background:#1a1a1a"></div>
<div class="a" style="left:735px;top:131px;width:1px;height:597px;background:#1a1a1a"></div>
<div class="a" style="left:801px;top:131px;width:1px;height:597px;background:#1a1a1a"></div>
<div class="a" style="left:866px;top:131px;width:1px;height:597px;background:#1a1a1a"></div>
<div class="a" style="left:932px;top:131px;width:1px;height:51px;background:#1a1a1a"></div>
<div class="a" style="left:932px;top:182px;width:1px;height:546px;background:#a0a0a0"></div>
<div class="a" style="left:2px;top:728px;width:931px;height:2px;background:#b0b0b0"></div>
<div class="a" style="left:19px;top:132px;width:29px;height:49px;border-style:solid;border-color:#5a2a6a;border-width:1px 1px 1px 2px"></div>
<div class="a" style="left:48px;top:132px;width:1px;height:50px;background:#fff"></div>
<div class="a" style="left:19px;top:182px;width:30px;height:1px;background:#2020a0"></div>
<div class="a" style="left:0;top:768px;width:1022px;height:40px;background:#f0f0f0"></div>
<div class="btn" style="left:4px;top:775.5px;width:26px;height:23px"></div>
<div class="btn" style="left:35px;top:775.5px;width:86px;height:23px"></div>
<div class="t" style="left:79.5px;top:779.8px;font-size:12px;transform:scaleX(0.9);transform-origin:0 0;color:#111">Pri<u>n</u>t...</div>
<div class="a" style="left:126px;top:777px;width:728px;height:20px;border-style:solid;border-width:2px 1px 1px 2px;border-color:#8a8a8a #fff #fff #8a8a8a;background:#f0f0f0"></div>
<div class="t" style="left:127.80000000000001px;top:778.6px;font-size:12px;transform:scaleX(0.862);transform-origin:0 0;color:#111">Click 'Reports' menu and select next report to view.</div>
<div class="btn" style="left:858.5px;top:774.5px;width:65.5px;height:23px"></div>
<div class="t" style="left:892.5px;top:778.8px;font-size:12px;transform:scaleX(0.88);transform-origin:0 0;color:#111">Sort</div>
<div class="btn" style="left:931.5px;top:774.5px;width:76.5px;height:23px"></div>
<div class="t" style="left:970px;top:778.8px;font-size:12px;transform:scaleX(0.88);transform-origin:0 0;color:#111">Close</div>
<svg class="a" style="left:-1px;top:-1px" width="1024" height="804" viewBox="0 0 1024 804">
<defs>
<linearGradient id="pb" x1="0" y1="0" x2="0" y2="1"><stop offset="0" stop-color="#000080"/><stop offset="0.45" stop-color="#0000a0"/><stop offset="0.55" stop-color="#8080ff"/><stop offset="1" stop-color="#c0c0ff"/></linearGradient>
<linearGradient id="pw" x1="0" y1="0" x2="0" y2="1"><stop offset="0" stop-color="#000080"/><stop offset="0.4" stop-color="#3030c0"/><stop offset="0.6" stop-color="#c0c0ff"/><stop offset="1" stop-color="#ffffff"/></linearGradient>
<pattern id="chk" width="2" height="2" patternUnits="userSpaceOnUse"><rect width="2" height="2" fill="#e8e8e8"/><rect width="1" height="1" fill="#9a9a9a"/><rect x="1" y="1" width="1" height="1" fill="#9a9a9a"/></pattern>
</defs>
<!-- help bubble -->
<path d="M11.5 781.2 Q11.5 779.6 13.1 779.6 L22.4 779.6 Q24 779.6 24 781.2 L24 790.9 Q24 792.5 22.4 792.5 L20.5 792.5 L21.6 795.3 L17.6 792.5 L13.1 792.5 Q11.5 792.5 11.5 790.9 Z" fill="#ffffc0" stroke="#3a3a3a" stroke-width="1.3"/>
<text x="17.4" y="790" font-family="Liberation Serif" font-weight="bold" font-size="12.5" fill="#000090" text-anchor="middle">?</text>
<!-- printer -->
<path d="M50 788.5 Q48.3 790 48.3 792 Q48.3 794.6 50.5 794.6 L63.5 794.6 Q66.8 794.6 66.8 791 Q66.8 787.5 63.5 787.5 L51 787.5 Z" fill="url(#chk)" stroke="#111" stroke-width="1.2"/>
<path d="M62 787.8 Q66.3 788 66.3 791 Q66.3 794 63 794.2 Z" fill="#808080"/>
<rect x="54.6" y="781.2" width="11" height="3.6" rx="0.8" fill="url(#pb)" stroke="#222" stroke-width="0.9"/>
<rect x="52.4" y="784.6" width="9.6" height="4" rx="0.8" fill="url(#pw)" stroke="#111" stroke-width="1"/>
<circle cx="57.6" cy="791.8" r="0.9" fill="#ff2020"/>
<circle cx="60.6" cy="791.8" r="0.9" fill="#20d020"/>
<!-- sort funnel -->
<path d="M867.3 776.9 L881.8 776.9 L876 783 L876 786.6 L872.2 786.6 L872.2 783 Z" fill="#ffffff" stroke="#102020" stroke-width="1.2" stroke-linejoin="round"/>
<path d="M868.5 777.8 L872.5 782.5 L873.2 782.5 L870.5 777.8 Z M880.6 777.8 L876.3 782.6 L875.5 782.6 L878.4 777.8 Z M872.6 785 L875.6 785 L875.6 786 L872.6 786 Z" fill="#008080"/>
<text x="867.8" y="795.3" font-family="Liberation Serif" font-weight="bold" font-size="8.8" fill="#ff0000" letter-spacing="0.1">ABC..</text>
<!-- close door -->
<path d="M946.5 779.6 L955 779.6 L949.5 784.3 L949.5 790 L946.5 790.6 Z" fill="#8a8a8a"/>
<path d="M943.6 790.8 L946 790.8 L946 778.9 L955.6 778.9 L955.6 782" fill="none" stroke="#1a1a1a" stroke-width="1.2"/>
<path d="M949.2 784.3 L955.6 778.6 L955.6 789.4 L949.2 793.7 Z" fill="#008b8b" stroke="#0a2a2a" stroke-width="0.9"/>
<circle cx="951.5" cy="787.3" r="0.5" fill="#000"/>
<path d="M956.8 783 A3.7 3.7 0 1 1 957 790.6" fill="none" stroke="#0000a0" stroke-width="2.3"/>
<path d="M953.4 790.6 L957.6 787.2 L957.8 793.6 Z" fill="#0000a0"/>
</svg>
</div>
</body></html>
